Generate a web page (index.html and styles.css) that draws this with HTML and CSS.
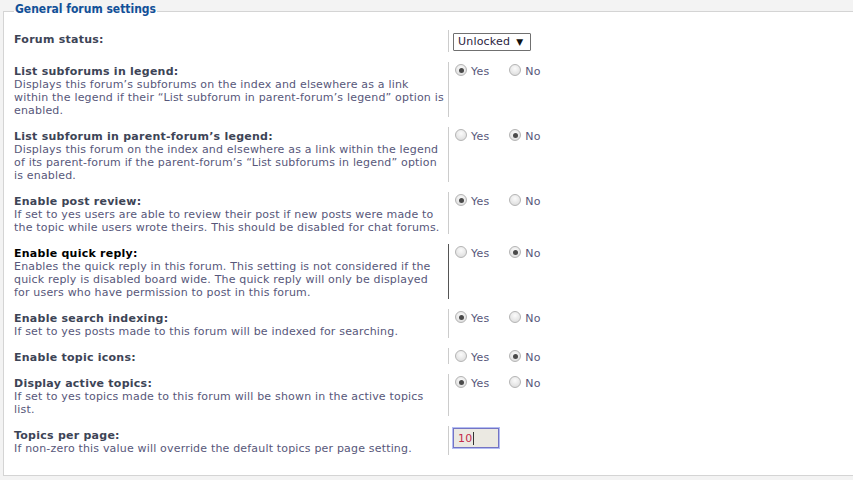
FILE: index.html
```html
<!DOCTYPE html>
<html lang="en">
<head>
<meta charset="utf-8">
<title>General forum settings</title>
<link rel="stylesheet" href="styles.css">
</head>
<body>
<fieldset class="settings">
  <legend class="settings-title">General forum settings</legend>

  <dl class="row">
    <dt class="term"><label class="term-label">Forum status:</label></dt>
    <dd class="field field-select"><span class="select">Unlocked <span class="select-arrow">▼</span></span></dd>
  </dl>

  <dl class="row">
    <dt class="term"><label class="term-label">List subforums in legend:</label><br><span class="explain">Displays this forum’s subforums on the index and elsewhere as a link<br>within the legend if their “List subforum in parent-forum’s legend” option is<br>enabled.</span></dt>
    <dd class="field"><span class="choice"><span class="radio checked"></span>Yes</span><span class="choice"><span class="radio"></span>No</span></dd>
  </dl>

  <dl class="row">
    <dt class="term"><label class="term-label">List subforum in parent-forum’s legend:</label><br><span class="explain">Displays this forum on the index and elsewhere as a link within the legend<br>of its parent-forum if the parent-forum’s “List subforums in legend” option<br>is enabled.</span></dt>
    <dd class="field"><span class="choice"><span class="radio"></span>Yes</span><span class="choice"><span class="radio checked"></span>No</span></dd>
  </dl>

  <dl class="row">
    <dt class="term"><label class="term-label">Enable post review:</label><br><span class="explain">If set to yes users are able to review their post if new posts were made to<br>the topic while users wrote theirs. This should be disabled for chat forums.</span></dt>
    <dd class="field"><span class="choice"><span class="radio checked"></span>Yes</span><span class="choice"><span class="radio"></span>No</span></dd>
  </dl>

  <dl class="row row-hover">
    <dt class="term"><label class="term-label">Enable quick reply:</label><br><span class="explain">Enables the quick reply in this forum. This setting is not considered if the<br>quick reply is disabled board wide. The quick reply will only be displayed<br>for users who have permission to post in this forum.</span></dt>
    <dd class="field"><span class="choice"><span class="radio"></span>Yes</span><span class="choice"><span class="radio checked"></span>No</span></dd>
  </dl>

  <dl class="row">
    <dt class="term"><label class="term-label">Enable search indexing:</label><br><span class="explain">If set to yes posts made to this forum will be indexed for searching.</span></dt>
    <dd class="field"><span class="choice"><span class="radio checked"></span>Yes</span><span class="choice"><span class="radio"></span>No</span></dd>
  </dl>

  <dl class="row">
    <dt class="term"><label class="term-label">Enable topic icons:</label></dt>
    <dd class="field"><span class="choice"><span class="radio"></span>Yes</span><span class="choice"><span class="radio checked"></span>No</span></dd>
  </dl>

  <dl class="row">
    <dt class="term"><label class="term-label">Display active topics:</label><br><span class="explain">If set to yes topics made to this forum will be shown in the active topics<br>list.</span></dt>
    <dd class="field"><span class="choice"><span class="radio checked"></span>Yes</span><span class="choice"><span class="radio"></span>No</span></dd>
  </dl>

  <dl class="row">
    <dt class="term"><label class="term-label">Topics per page:</label><br><span class="explain">If non-zero this value will override the default topics per page setting.</span></dt>
    <dd class="field field-input"><span class="textbox">10<span class="caret"></span></span></dd>
  </dl>
</fieldset>
</body>
</html>
```

FILE: styles.css
```css
html, body {
  margin: 0;
  padding: 0;
  background: #f3f3f3;
  overflow: hidden;
}

body {
  font-family: "DejaVu Sans", Verdana, sans-serif;
}

.settings {
  margin: 1px 0 0 3px;
  padding: 0 10px 10px 10px;
  border: 1px solid #d4d4d4;
  border-right: none;
  background: #ffffff;
  min-width: 0;
}

.settings-title {
  padding: 0 1px 5px 1px;
  margin-left: 0;
  font-family: "DejaVu Sans Condensed", "DejaVu Sans", sans-serif;
  font-weight: bold;
  font-size: 12px;
  line-height: 16px;
  color: #115098;
  margin-bottom: 8px;
}

.row {
  display: flex;
  margin: 0 0 10px 0;
  font-size: 11px;
  line-height: 13px;
  letter-spacing: 0.18px;
}

.term {
  box-sizing: border-box;
  width: 435px;
  flex: none;
  padding-top: 3px;
  border-right: 1px solid #cccccc;
}

.term-label {
  font-weight: bold;
  color: #3d4456;
  letter-spacing: 0.25px;
}

.explain {
  color: #57577a;
}

.row-hover .term {
  border-right-color: #555555;
}

.row-hover .term-label {
  color: #000000;
}

.field {
  margin: 0;
  padding: 3px 0 0 6px;
  display: flex;
  align-items: flex-start;
  color: #57577a;
  letter-spacing: 0.2px;
}

.field-select {
  padding: 3px 0 1px 4px;
}

.select {
  display: inline-flex;
  align-items: center;
  box-sizing: border-box;
  width: 78px;
  height: 18px;
  padding: 0 0 0 4px;
  border: 1px solid #707070;
  border-radius: 1px;
  background: #ffffff;
  color: #2a2440;
  font-size: 11px;
  line-height: 16px;
  letter-spacing: 0.2px;
}

.select-arrow {
  margin-left: 6px;
  font-size: 9px;
  color: #111111;
}

.choice {
  display: inline-flex;
  align-items: flex-start;
  margin-right: 20px;
}

.radio {
  box-sizing: border-box;
  width: 12px;
  height: 12px;
  margin: -1px 4px 0 0;
  border-radius: 50%;
  border: 1px solid #b4b4b4;
  background: radial-gradient(circle at 50% 35%, #fbfbfb 0%, #e6e6e6 60%, #d6d6d6 100%);
  display: inline-flex;
  align-items: center;
  justify-content: center;
}

.radio.checked::after {
  content: "";
  width: 5px;
  height: 5px;
  border-radius: 50%;
  background: #4a4a4a;
}

.field-input {
  padding: 2px 0 0 4px;
}

.textbox {
  box-sizing: border-box;
  display: inline-flex;
  align-items: center;
  width: 46px;
  height: 20px;
  padding-left: 4px;
  border: 1px solid #7474c4;
  box-shadow: 0 0 0 1px #b3bdf3;
  background: #ebe9e2;
  color: #c42a4c;
  font-size: 11px;
}

.caret {
  width: 1px;
  height: 13px;
  margin-left: 1px;
  background: #333333;
}
```
